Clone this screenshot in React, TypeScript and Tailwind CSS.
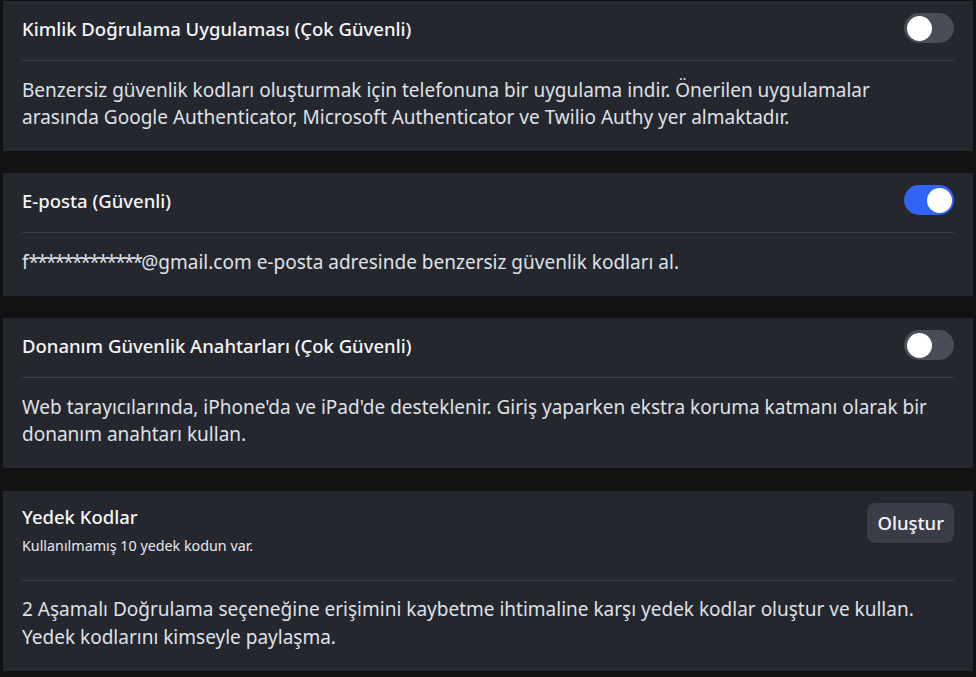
import React from "react";

function Toggle({ on }: { on: boolean }) {
  return (
    <div
      className={
        on
          ? "relative w-[50px] h-[30px] rounded-full bg-[#3164f4] shrink-0"
          : "relative w-[50px] h-[30px] rounded-full bg-[#4a4c57] shrink-0"
      }
    >
      <div
        className={
          on
            ? "absolute top-[2.5px] right-[2.5px] w-[25px] h-[25px] rounded-full bg-white"
            : "absolute top-[2.5px] left-[2.5px] w-[25px] h-[25px] rounded-full bg-white"
        }
      />
    </div>
  );
}

function ToggleCard({ title, on, body }: { title: string; on: boolean; body: React.ReactNode }) {
  return (
    <div className="bg-[#25272f] px-[19px] pt-[12px] pb-[20px]">
      <div className="flex items-center justify-between h-[30px]">
        <div className="text-[18.5px] font-medium text-[#f4f5f7] leading-[27px]">{title}</div>
        <Toggle on={on} />
      </div>
      <div className="mt-[17px] h-px bg-[#3a3c45]" />
      <div className="mt-[16px] pr-[14px] text-[19px] leading-[27px] text-[#dfe1e6]">{body}</div>
    </div>
  );
}

export default function App() {
  return (
    <div
      className="min-h-screen bg-[#121214] pt-px px-[3px] pb-[6px] flex flex-col gap-[22px]"
      style={{ fontFamily: '"Noto Sans", sans-serif' }}
    >
      <ToggleCard
        title="Kimlik Doğrulama Uygulaması (Çok Güvenli)"
        on={false}
        body="Benzersiz güvenlik kodları oluşturmak için telefonuna bir uygulama indir. Önerilen uygulamalar arasında Google Authenticator, Microsoft Authenticator ve Twilio Authy yer almaktadır."
      />
      <ToggleCard
        title="E-posta (Güvenli)"
        on={true}
        body={
          <>
            f<span className="tracking-[-1.8px]">*************</span>@gmail.com e-posta adresinde benzersiz
            güvenlik kodları al.
          </>
        }
      />
      <ToggleCard
        title="Donanım Güvenlik Anahtarları (Çok Güvenli)"
        on={false}
        body="Web tarayıcılarında, iPhone'da ve iPad'de desteklenir. Giriş yaparken ekstra koruma katmanı olarak bir donanım anahtarı kullan."
      />
      <div className="mt-px bg-[#25272f] px-[19px] pt-[12px] pb-[20px]">
        <div className="flex items-start justify-between">
          <div>
            <div className="text-[18.5px] font-medium text-[#f4f5f7] leading-[27px]">Yedek Kodlar</div>
            <div className="mt-[6px] text-[14.3px] leading-[20px] text-[#e6e8ec]">
              Kullanılmamış 10 yedek kodun var.
            </div>
          </div>
          <button className="h-[40px] px-[10px] rounded-[8px] bg-[#3a3c48] text-[18.5px] font-medium text-[#f4f5f7]">
            Oluştur
          </button>
        </div>
        <div className="mt-[24px] h-px bg-[#3a3c45]" />
        <div className="mt-[14px] pr-[14px] text-[19px] leading-[28px] text-[#dfe1e6]">
          2 Aşamalı Doğrulama seçeneğine erişimini kaybetme ihtimaline karşı yedek kodlar oluştur ve kullan.
          Yedek kodlarını kimseyle paylaşma.
        </div>
      </div>
    </div>
  );
}
